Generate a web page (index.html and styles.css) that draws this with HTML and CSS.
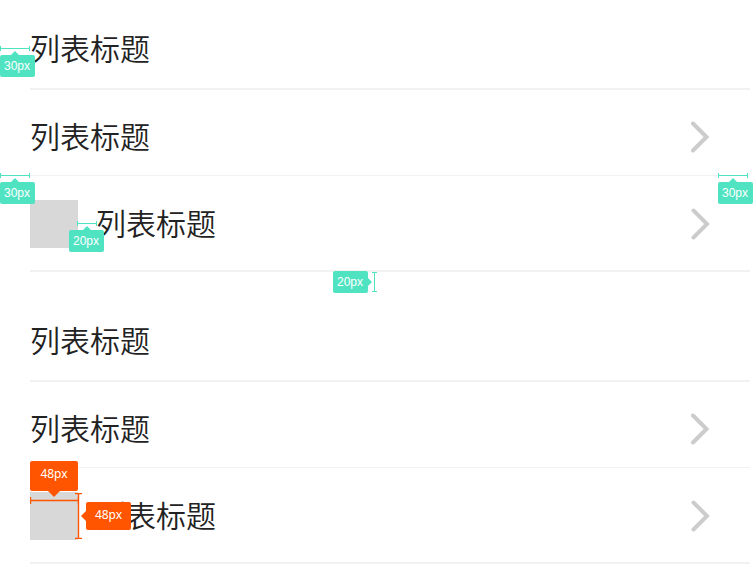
FILE: index.html
```html
<!DOCTYPE html>
<html lang="zh-CN">
<head>
<meta charset="utf-8">
<title>列表</title>
<link rel="stylesheet" href="styles.css">
</head>
<body>
<main class="sheet">
  <ul class="list">
    <li class="row row-first"><span class="title">列表标题</span></li>
    <li class="row row-link"><span class="title">列表标题</span>
      <svg class="chevron" viewBox="0 0 20 32"><path d="M3 2.5 16.5 16 3 29.5"/></svg></li>
    <li class="row row-media"><span class="thumb"></span><span class="title">列表标题</span>
      <svg class="chevron" viewBox="0 0 20 32"><path d="M3.5 2.5 17 16 3.5 29.5"/></svg></li>
  </ul>
  <ul class="list">
    <li class="row row-first"><span class="title">列表标题</span></li>
    <li class="row row-link"><span class="title">列表标题</span>
      <svg class="chevron" viewBox="0 0 20 32"><path d="M3 2.5 16.5 16 3 29.5"/></svg></li>
    <li class="row row-media"><span class="thumb"></span><span class="title">列表标题</span>
      <svg class="chevron" viewBox="0 0 20 32"><path d="M3.5 2.5 17 16 3.5 29.5"/></svg></li>
  </ul>

  <div class="note note-a"><svg class="rule" width="30" height="5"><path d="M0 2.5H30M.5 0V5M29.5 0V5"/></svg><span class="tag tip-up">30px</span></div>
  <div class="note note-b"><svg class="rule" width="30" height="5"><path d="M0 2.5H30M.5 0V5M29.5 0V5"/></svg><span class="tag tip-up">30px</span></div>
  <div class="note note-c"><svg class="rule" width="30" height="5"><path d="M0 2.5H30M.5 0V5M29.5 0V5"/></svg><span class="tag tip-up">30px</span></div>
  <div class="note note-d"><svg class="rule rule-inset" width="20" height="5"><path d="M0 2.5H20M.5 0V5M19.5 0V5"/></svg><span class="tag tip-up tip-center">20px</span></div>
  <div class="note note-e"><span class="tag tip-right">20px</span><svg class="rule" width="5" height="20"><path d="M2.5 0V20M0 .5H5M0 19.5H5"/></svg></div>
  <div class="note size note-f"><span class="tag tag-width tip-down">48px</span><svg class="rule" width="49" height="7"><path d="M0 3.5H49M.5 0V7M48.5 0V7"/></svg></div>
  <div class="note size note-g"><svg class="rule" width="7" height="46"><path d="M3.5 0V46M0 .5H7M0 45.5H7"/></svg><span class="tag tag-height tip-left">48px</span></div>
</main>
</body>
</html>
```
FILE: styles.css
```css
* { box-sizing: border-box; }
body {
  margin: 0;
  background: #fff;
  color: #222;
  font-family: "Noto Sans CJK SC", sans-serif;
}
.sheet { position: relative; overflow: hidden; }
.list {
  list-style: none;
  margin: 0 3px 20px 30px;
  padding: 0;
}
.list:last-of-type { margin-bottom: 0; }
.row {
  display: flex;
  align-items: center;
  padding-right: 40px;
  border-bottom: 2px solid #f2f2f2;
}
.row-first { height: 90px; padding-top: 10px; }
.row-link { height: 86px; padding-top: 8px; border-bottom-width: 1px; }
.row-media { height: 96px; padding-top: 2px; }
.title { padding-bottom: 4px; font-size: 30px; font-weight: 350; line-height: 44px; }
.thumb {
  width: 48px;
  height: 48px;
  margin-right: 18px;
  background: #d8d8d8;
}
.chevron {
  width: 20px;
  height: 32px;
  margin-left: auto;
  fill: none;
  stroke: #ccc;
  stroke-width: 4;
  stroke-linecap: round;
  stroke-linejoin: miter;
}

/* Spacing annotations laid over the list */
.note {
  --ink: #50e3c2;
  position: absolute;
  display: flex;
  flex-direction: column;
  align-items: flex-start;
  gap: 4px;
}
.rule { display: block; fill: none; stroke: var(--ink); stroke-width: 1; }
.rule-inset { margin-left: 8px; }
.tag {
  position: relative;
  width: 35px;
  height: 22px;
  padding-right: 1px;
  border-radius: 2px;
  background: var(--ink);
  color: #fff;
  font: 12px/22px "Liberation Sans", sans-serif;
  text-align: center;
}
.tag::before {
  content: "";
  position: absolute;
  border: 4px solid transparent;
}
.tip-up::before { left: 11px; bottom: 100%; border-top: 0; border-bottom-color: var(--ink); }
.tip-center::before { left: 14px; }
.tip-right::before { left: 100%; top: 7px; border-right: 0; border-left-color: var(--ink); }

.note-a { left: 0; top: 46px; }
.note-b { left: 0; top: 173px; }
.note-c { right: 0; top: 173px; }
.note-d { left: 69px; top: 221px; }
.note-e { left: 333px; top: 271px; flex-direction: row; align-items: center; }

.size { --ink: #ff5500; }
.size .rule path { stroke-width: 1.4; }
.size .tag { padding-right: 0; font-family: "Noto Sans", sans-serif; }
.tag-width { width: 48px; height: 30px; line-height: 26px; }
.tag-height { width: 45px; height: 28px; line-height: 26px; }
.tip-down::before { left: 18px; top: 100%; border-width: 6px; border-bottom: 0; border-top-color: var(--ink); }
.tip-left::before { right: 100%; top: 9px; border-width: 5px; border-left: 0; border-right-color: var(--ink); }
.note-f { left: 30px; top: 461px; gap: 6px; }
.note-g { left: 75px; top: 493px; gap: 4px; flex-direction: row; align-items: center; }
```
